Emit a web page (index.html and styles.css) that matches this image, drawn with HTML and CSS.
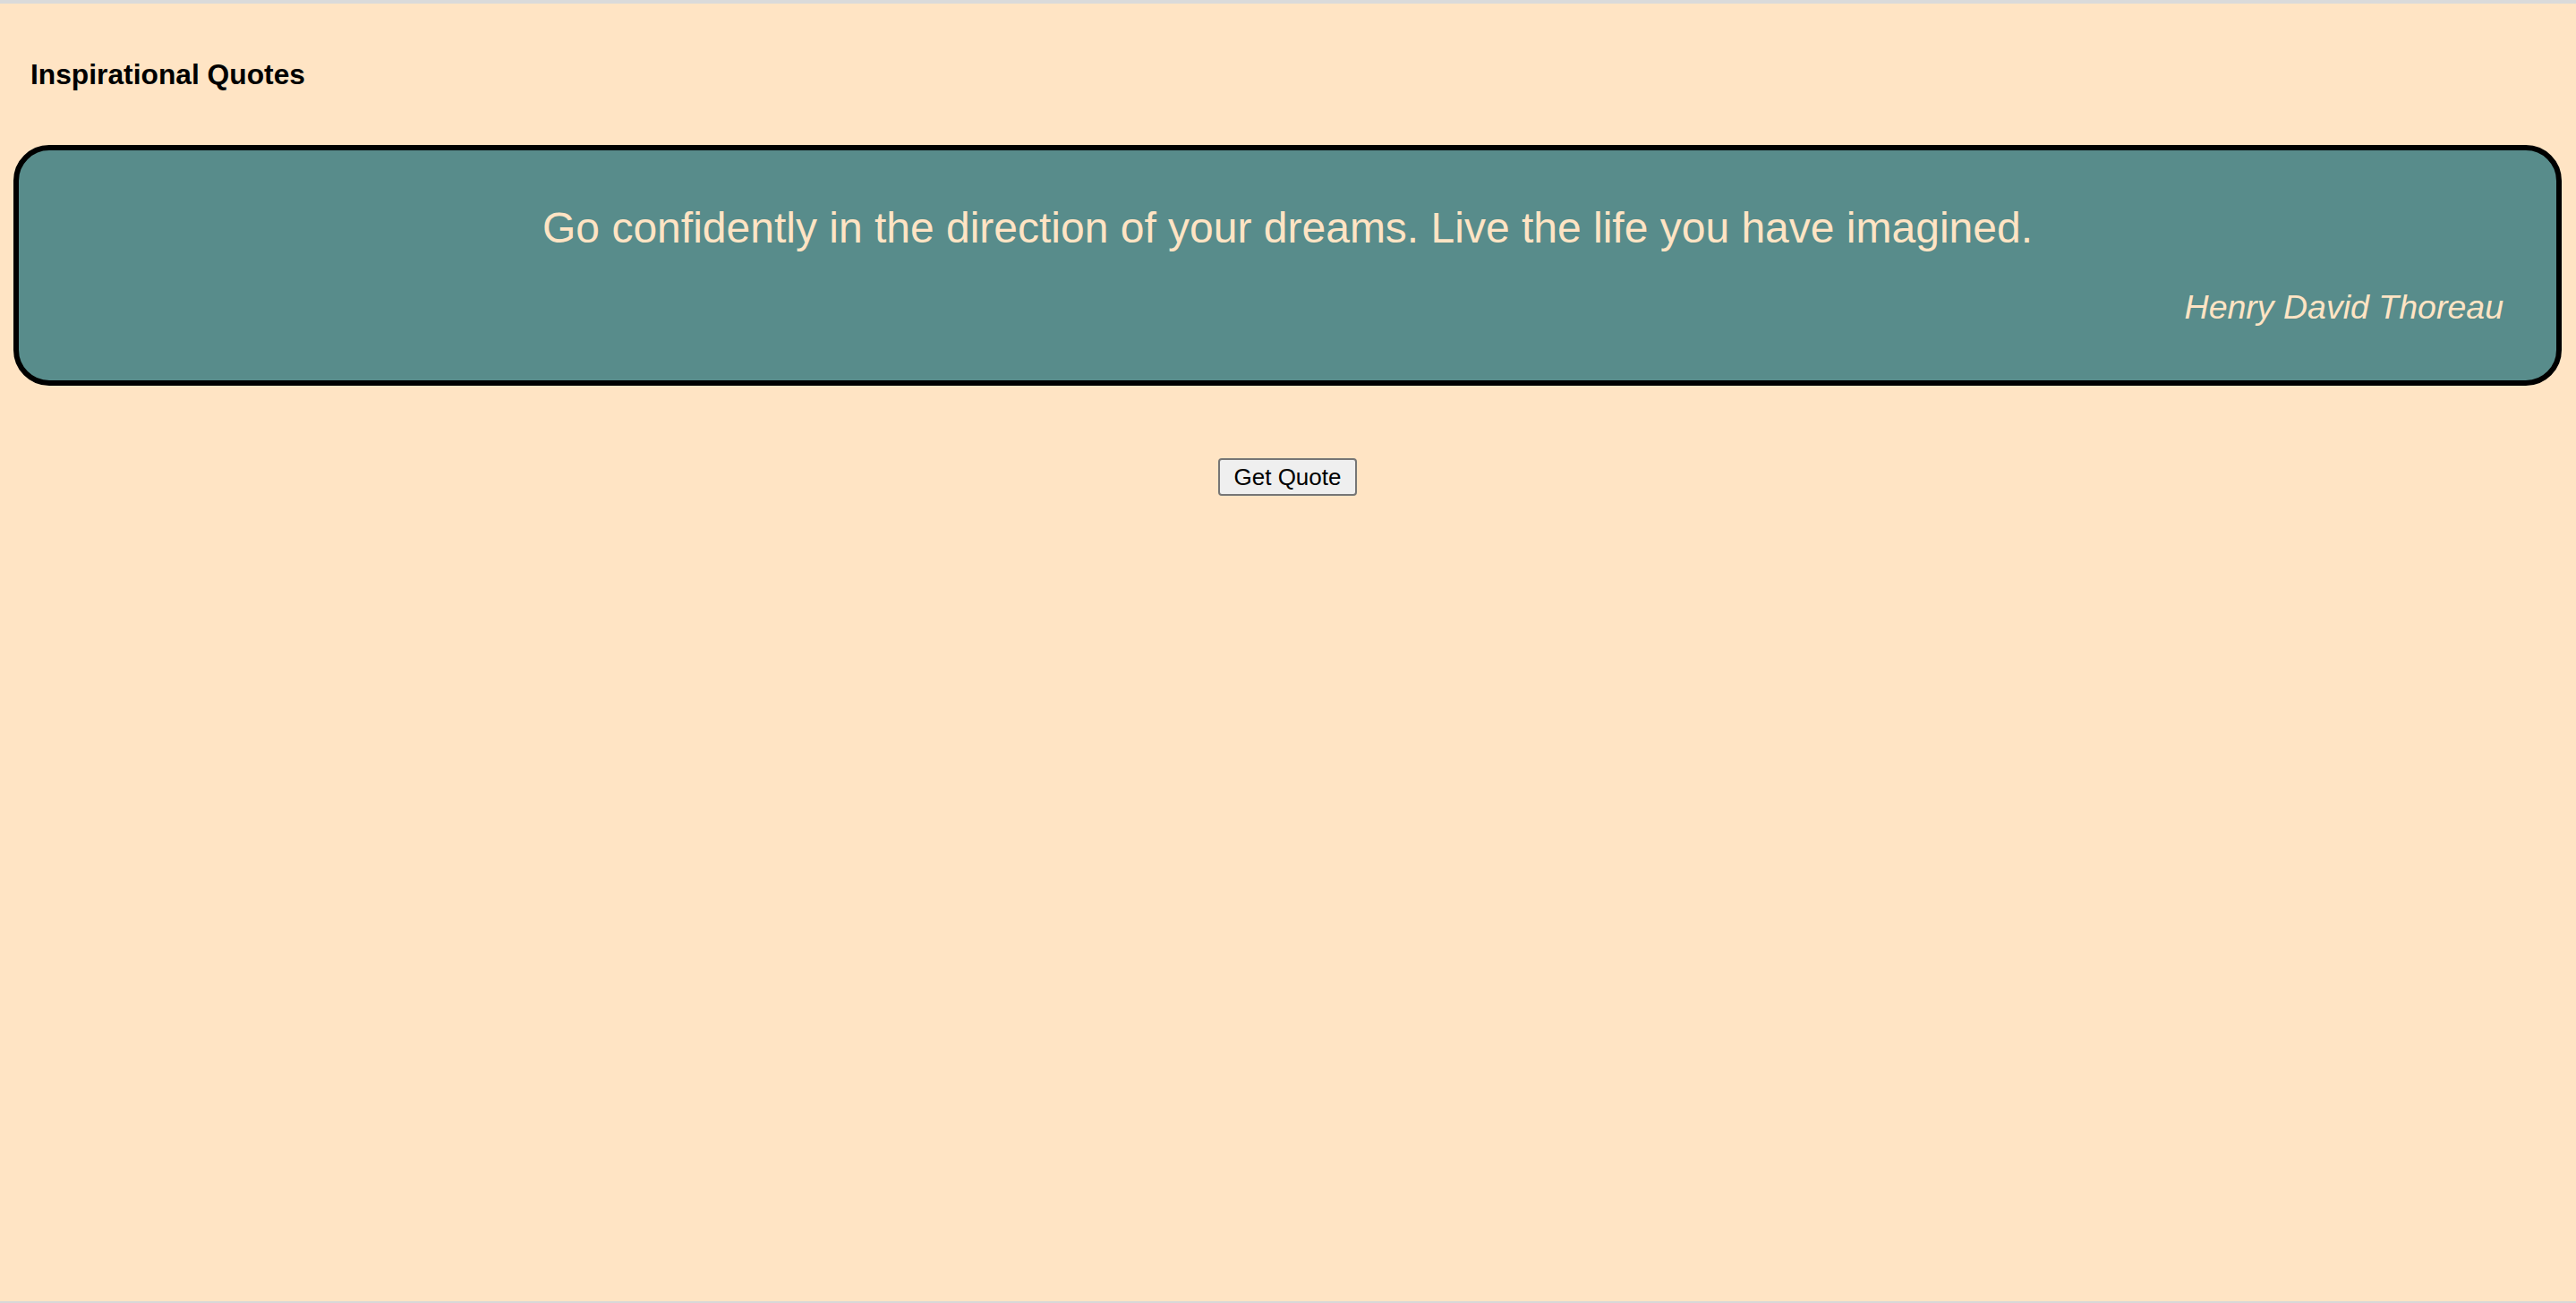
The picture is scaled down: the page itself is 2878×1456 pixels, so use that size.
FILE: index.html
```html
<!DOCTYPE html>
<html lang="en">
<head>
<meta charset="utf-8">
<title>Inspirational Quotes</title>
<link rel="stylesheet" href="styles.css">
</head>
<body>
<div class="frame">
  <h1 class="title">Inspirational Quotes</h1>
  <div class="card">
    <p class="quote">Go confidently in the direction of your dreams. Live the life you have imagined.</p>
    <p class="author">Henry David Thoreau</p>
  </div>
  <div class="actions">
    <button class="btn" type="button">Get Quote</button>
  </div>
</div>
</body>
</html>
```

FILE: styles.css
```css
html, body {
  margin: 0;
  padding: 0;
  background: #ffe4c4;
}

.frame {
  box-sizing: border-box;
  height: 100vh;
  border-top: 4px solid #dadada;
  border-bottom: 2px solid #d8d8d8;
  padding: 0 16px 0 15px;
  font-family: "Liberation Sans", Arial, sans-serif;
  background: #ffe4c4;
}

.title {
  margin: 0;
  padding: 61px 0 0 19px;
  font-size: 31.75px;
  line-height: 36px;
  font-weight: bold;
  color: #000;
}

.card {
  margin-top: 61px;
  border: 6px solid #000;
  border-radius: 40px;
  background: #588c8b;
  padding: 59px;
  color: #ffe4c4;
}

.quote {
  margin: 0;
  text-align: center;
  font-size: 48px;
  line-height: 56px;
}

.author {
  margin: 38px 0 0 0;
  text-align: right;
  font-style: italic;
  font-size: 37.5px;
  line-height: 45px;
}

.actions {
  margin-top: 81px;
  text-align: center;
}

.btn {
  font-family: "Liberation Sans", Arial, sans-serif;
  font-size: 26px;
  line-height: 30px;
  padding: 4px 16px;
  border: 2px solid #767676;
  border-radius: 4px;
  background: #efefef;
  color: #000;
  margin: 0;
}
```
